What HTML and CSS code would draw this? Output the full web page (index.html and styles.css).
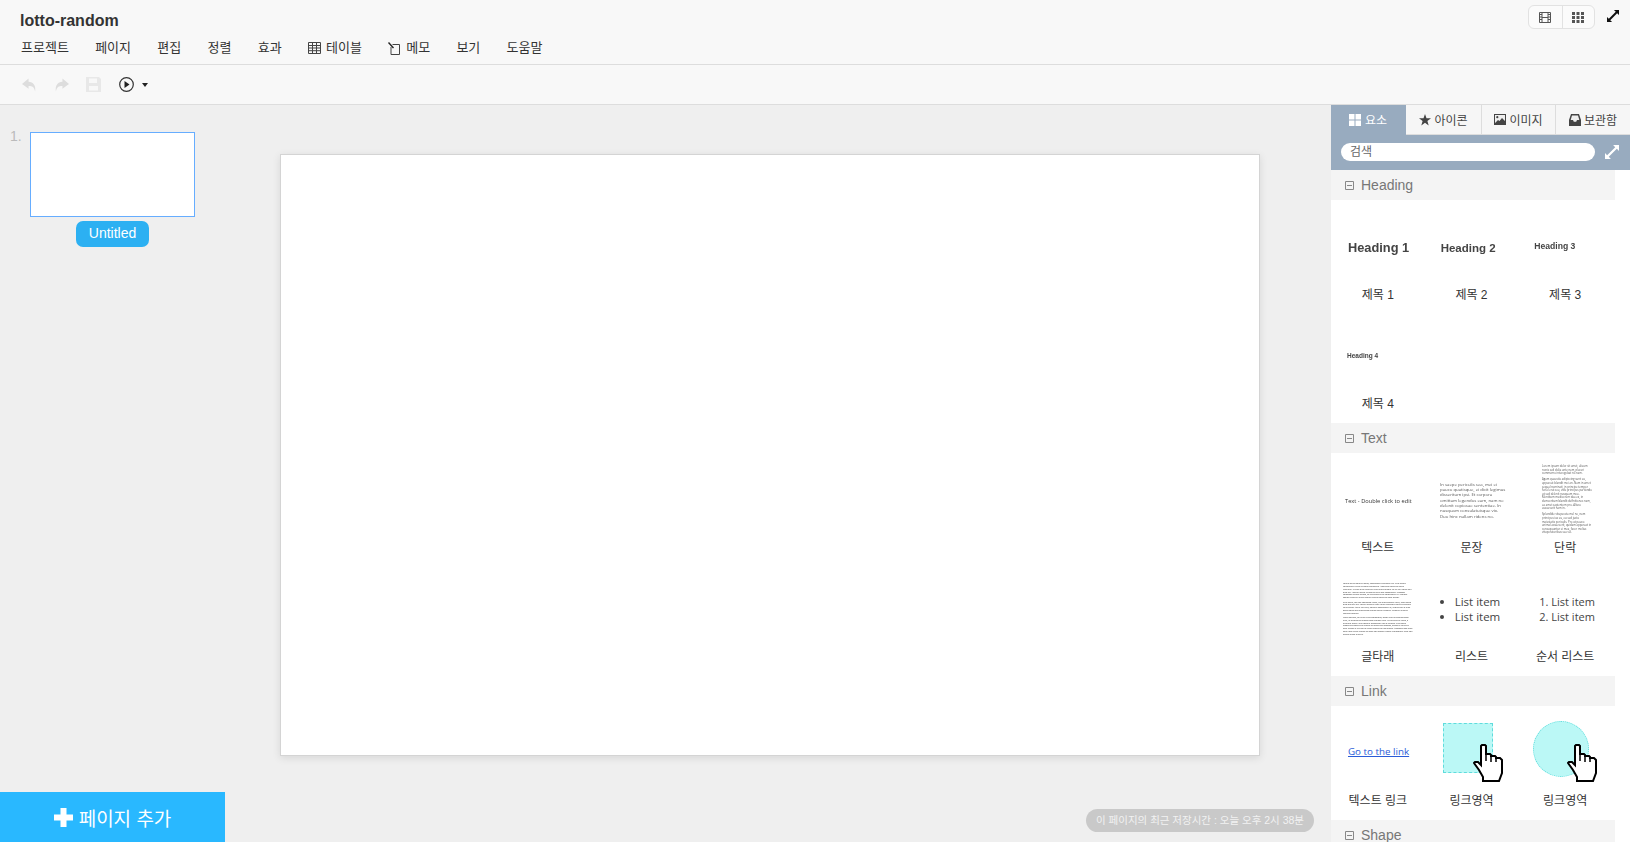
FILE: index.html
```html
<!DOCTYPE html>
<html lang="ko">
<head>
    <meta charset="UTF-8">
    <title>lotto-random</title>
    <link rel="stylesheet" href="styles.css">
</head>
<body>

<svg class="defs" width="0" height="0">
    <symbol id="hand" viewBox="0 0 30 39">
        <path d="M8 20V2L9 1H12L13 2V10H17L18 11V12H22L23 13V14H27L29 16V29L26 37H10V33L6 26L1 19L2 18H5L8 21Z" fill="#fff" stroke="#000" stroke-width="2"/>
        <path d="M13 10V17M18 12V18M23 14V18" fill="none" stroke="#000" stroke-width="1.5"/>
    </symbol>
    <symbol id="expand" viewBox="0 0 13 13">
        <path d="M7.5 0H13V5.5L11 3.5L3.5 11L5.5 13H0V7.5L2 9.5L9.5 2Z"/>
    </symbol>
    <symbol id="minus-box" viewBox="0 0 9 9">
        <path d="M.5.5H8.5V8.5H.5ZM2 4.5H7" fill="none" stroke="#888"/>
    </symbol>
</svg>

<header class="top">
    <div class="title">lotto-random</div>
    <nav class="menu">
        <span>프로젝트</span>
        <span>페이지</span>
        <span>편집</span>
        <span>정렬</span>
        <span>효과</span>
        <span class="with-icon">
            <svg width="13" height="12" viewBox="0 0 13 12"><path d="M.5.5H12.5V11.5H.5ZM.5 3.5H12.5M.5 6H12.5M.5 8.7H12.5M4.5 .5V11.5M8.5 .5V11.5" fill="none" stroke="#444"/></svg>
            테이블
        </span>
        <span class="with-icon">
            <svg width="13" height="13" viewBox="0 0 13 13"><path d="M4.5 2.5H11.5V12.5H3V5" fill="none" stroke="#444"/><path d="M.5.5L5.5 6" fill="none" stroke="#222" stroke-width="1.4"/></svg>
            메모
        </span>
        <span>보기</span>
        <span>도움말</span>
    </nav>
    <div class="view-switch">
        <button class="view-btn">
            <svg width="12" height="11" viewBox="0 0 12 11"><path d="M.5.5H11.5V10.5H.5ZM3 .5V10.5M9 .5V10.5M3 5.5H9" fill="none" stroke="#555"/><path d="M0 2.5H3M0 5H3M0 7.5H3M9 2.5H12M9 5H12M9 7.5H12" stroke="#555"/></svg>
        </button>
        <button class="view-btn">
            <svg width="12" height="11" viewBox="0 0 12 11" fill="#555"><path d="M0 0H3V3H0ZM4.5 0H7.5V3H4.5ZM9 0H12V3H9ZM0 4H3V7H0ZM4.5 4H7.5V7H4.5ZM9 4H12V7H9ZM0 8H3V11H0ZM4.5 8H7.5V11H4.5ZM9 8H12V11H9Z"/></svg>
        </button>
    </div>
    <svg class="full-icon" width="12" height="12"><use href="#expand"/></svg>
</header>

<div class="toolbar">
    <svg class="tool flip" width="15" height="16" viewBox="0 0 16 16"><path d="M9 1L16 7L9 12V9C5 9 3 10 2 15C1 8 4 5 9 4.5Z" fill="#ddd"/></svg>
    <svg class="tool" width="15" height="16" viewBox="0 0 16 16"><path d="M9 1L16 7L9 12V9C5 9 3 10 2 15C1 8 4 5 9 4.5Z" fill="#ddd"/></svg>
    <svg class="tool" width="15" height="15" viewBox="0 0 15 15"><path d="M0 0H13L15 2V15H0ZM3 1.5V6H11V1.5ZM3 9V13.5H12V9Z" fill="#e8e8e8" fill-rule="evenodd"/></svg>
    <svg class="tool play" width="15" height="15" viewBox="0 0 15 15"><circle cx="7.5" cy="7.5" r="6.8" fill="none" stroke="#333" stroke-width="1.2"/><path d="M5.5 4L10.5 7.5L5.5 11Z" fill="#222"/></svg>
    <span class="caret"></span>
</div>

<main class="main">
    <aside class="pages">
        <div class="page-item">
            <span class="page-no">1.</span>
            <div class="page-col">
                <div class="thumb"></div>
                <span class="page-name">Untitled</span>
            </div>
        </div>
        <button class="add-page">
            <svg width="19" height="19" viewBox="0 0 19 19"><path d="M6.5 0H12.5V6.5H19V12.5H12.5V19H6.5V12.5H0V6.5H6.5Z" fill="#fff"/></svg>
            페이지 추가
        </button>
    </aside>

    <section class="stage">
        <div class="canvas"></div>
        <div class="save-note">이 페이지의 최근 저장시간 : 오늘 오후 2시 38분</div>
    </section>

    <aside class="panel">
        <div class="tabs">
            <div class="tab active">
                <svg width="12" height="12" viewBox="0 0 12 12" fill="#fff"><path d="M0 0H5.5V5.5H0ZM6.5 0H12V5.5H6.5ZM0 6.5H5.5V12H0ZM6.5 6.5H12V12H6.5Z"/></svg>
                요소
            </div>
            <div class="tab">
                <svg width="12" height="12" viewBox="0 0 12 12" fill="#444"><path d="M6 0L7.5 4.3H12L8.4 7L9.7 11.5L6 8.8L2.3 11.5L3.6 7L0 4.3H4.5Z"/></svg>
                아이콘
            </div>
            <div class="tab">
                <svg width="12" height="11" viewBox="0 0 12 11"><path d="M0 0H12V11H0Z" fill="#444"/><path d="M1 1H11V7L8 4L5.5 7L4 6L1 9Z" fill="#eee"/><circle cx="3.3" cy="3.2" r="1.1" fill="#444"/></svg>
                이미지
            </div>
            <div class="tab">
                <svg width="12" height="12" viewBox="0 0 12 12"><path d="M2 0H10L12 6V12H0V6Z" fill="#444"/><path d="M3 1.5H9L10.3 6H8L7.2 7.8H4.8L4 6H1.7Z" fill="#eee"/></svg>
                보관함
            </div>
        </div>
        <div class="search-bar">
            <input class="search" placeholder="검색">
            <svg class="search-full" width="14" height="14"><use href="#expand"/></svg>
        </div>

        <div class="sec-head"><svg width="9" height="9"><use href="#minus-box"/></svg>Heading</div>
        <div class="sec-body">
            <div class="item">
                <div class="preview"><b class="h1">Heading 1</b></div>
                <div class="label">제목 1</div>
            </div>
            <div class="item">
                <div class="preview"><b class="h2">Heading 2</b></div>
                <div class="label">제목 2</div>
            </div>
            <div class="item">
                <div class="preview"><b class="h3">Heading 3</b></div>
                <div class="label">제목 3</div>
            </div>
            <div class="item">
                <div class="preview"><b class="h4">Heading 4</b></div>
                <div class="label">제목 4</div>
            </div>
        </div>

        <div class="sec-head"><svg width="9" height="9"><use href="#minus-box"/></svg>Text</div>
        <div class="sec-body">
            <div class="item">
                <div class="preview"><span class="t-text">Text - Double click to edit</span></div>
                <div class="label">텍스트</div>
            </div>
            <div class="item">
                <div class="preview"><p class="t-sentence">In saepe periculis sea, mei ei pauco quatisque, ei dicit legimus disseritum ipsi. Et corpora omittam legendos eam, nam ne delenit copiosae sententiae. In nusquam consulatuisque vix. Duo hinc nullam ridens no.</p></div>
                <div class="label">문장</div>
            </div>
            <div class="item">
                <div class="preview">
                    <div class="t-para">
                        <p>Lorem ipsum dolor sit amet, alieum nonis sed dolia ante nam, placeri commemo interegebat no nam.</p>
                        <p>Agam quaestio adipiscing sunt eu, appareat blandit mei an. Nam in amet sequal nominati, in principe tempor ferial erat sea, vide principes partiendo ut sed delenit nusquam mea. Mentitum mediocrem dua ex, in democritum blandit definitiones nam, ea amet sapientem pro. Altera assueverit nam in.</p>
                        <p>Splendide vituperata mel ne, nam principes ius eu, eu sed justo maiestatis periculis. Pro ut pauco animal assueverit, quidam appareat in consequuntur ei mea, facer melius vituperatoribus sea vel.</p>
                    </div>
                </div>
                <div class="label">단락</div>
            </div>
            <div class="item">
                <div class="preview">
                    <div class="t-long">
                        <p>Lorem ipsum dolor sit amet, consectetur adipiscing elit. Cras mattis consectetur purus sit amet fermentum. Maecenas faucibus mollis interdum. Nullam quis risus eget urna mollis ornare vel eu leo. Donec sed odio dui. Aenean lacinia bibendum nulla sed consectetur. Praesent commodo cursus magna, vel scelerisque nisl consectetur et. Vivamus sagittis lacus vel augue laoreet rutrum faucibus dolor auctor.</p>
                        <p>Duis mollis, est non commodo luctus, nisi erat porttitor ligula, eget lacinia odio sem nec elit. Integer posuere erat a ante venenatis dapibus posuere velit aliquet. Morbi leo risus, porta ac consectetur ac, vestibulum at eros. Etiam porta sem malesuada magna mollis euismod. Curabitur blandit tempus porttitor.</p>
                        <p>Fusce dapibus, tellus ac cursus commodo, tortor mauris condimentum nibh, ut fermentum massa justo sit amet risus. Nulla vitae elit libero, a pharetra augue. Sed posuere consectetur est at lobortis. Cum sociis natoque penatibus et magnis dis parturient montes, nascetur ridiculus mus. Donec id elit non mi porta gravida at eget metus. Maecenas sed diam eget risus varius blandit sit amet non magna. Donec ullamcorper nulla non metus auctor fringilla.</p>
                    </div>
                </div>
                <div class="label">글타래</div>
            </div>
            <div class="item">
                <div class="preview">
                    <ul class="t-list">
                        <li>List item</li>
                        <li>List item</li>
                    </ul>
                </div>
                <div class="label">리스트</div>
            </div>
            <div class="item">
                <div class="preview">
                    <ol class="t-list t-ol">
                        <li>List item</li>
                        <li>List item</li>
                    </ol>
                </div>
                <div class="label">순서 리스트</div>
            </div>
        </div>

        <div class="sec-head"><svg width="9" height="9"><use href="#minus-box"/></svg>Link</div>
        <div class="sec-body">
            <div class="item">
                <div class="preview"><a class="t-link">Go to the link</a></div>
                <div class="label">텍스트 링크</div>
            </div>
            <div class="item">
                <div class="preview">
                    <div class="link-area"></div>
                    <svg class="hand" width="30" height="39"><use href="#hand"/></svg>
                </div>
                <div class="label">링크영역</div>
            </div>
            <div class="item">
                <div class="preview">
                    <div class="link-area round"></div>
                    <svg class="hand" width="30" height="39"><use href="#hand"/></svg>
                </div>
                <div class="label">링크영역</div>
            </div>
        </div>

        <div class="sec-head"><svg width="9" height="9"><use href="#minus-box"/></svg>Shape</div>
    </aside>
</main>

</body>
</html>
```

FILE: styles.css
```css
body {
    margin: 0;
    height: 100vh;
    overflow: hidden;
    display: flex;
    flex-direction: column;
    font-family: "Liberation Sans", "Noto Sans CJK KR", sans-serif;
    color: #333;
    background-color: #efefef;
}

.defs {
    position: absolute;
}

/* Top bar */
.top {
    position: relative;
    height: 64px;
    flex: none;
    background-color: #f8f8f8;
    border-bottom: 1px solid #dddddd;
}

.title {
    padding: 12px 0 0 20px;
    font-size: 16px;
    line-height: 18px;
    font-weight: bold;
}

.menu {
    display: flex;
    gap: 26.3px;
    padding: 9px 0 0 21px;
    font-size: 13px;
    line-height: 18px;
}

.with-icon {
    display: flex;
    align-items: center;
    gap: 5px;
}

.view-switch {
    position: absolute;
    top: 5px;
    left: 1528px;
    display: flex;
    height: 22px;
    border: 1px solid #e2e2e2;
    border-radius: 6px;
    background-color: #fbfbfb;
}

.view-btn {
    width: 32.5px;
    padding: 0;
    border: none;
    background: none;
    display: flex;
    align-items: center;
    justify-content: center;
}

.view-btn + .view-btn {
    border-left: 1px solid #e2e2e2;
}

.full-icon {
    position: absolute;
    top: 10px;
    left: 1607px;
    fill: #111;
}

/* Toolbar */
.toolbar {
    height: 39px;
    flex: none;
    display: flex;
    align-items: center;
    padding-left: 22px;
    background-color: #f8f8f8;
    border-bottom: 1px solid #dddddd;
}

.tool {
    margin-right: 16.8px;
}

.flip {
    transform: scaleX(-1);
}

.play {
    margin-left: 2px;
    margin-right: 8px;
}

.caret {
    border-left: 3.5px solid transparent;
    border-right: 3.5px solid transparent;
    border-top: 4px solid #222;
}

/* Main area */
.main {
    flex: 1;
    min-height: 0;
    display: flex;
}

.pages {
    width: 225px;
    flex: none;
    display: flex;
    flex-direction: column;
    justify-content: space-between;
}

.page-item {
    display: flex;
    padding: 27px 0 0 10px;
}

.page-no {
    width: 20px;
    font-size: 14px;
    line-height: 8px;
    color: #bbbbbb;
}

.page-col {
    display: flex;
    flex-direction: column;
    align-items: center;
}

.thumb {
    width: 163px;
    height: 83px;
    background-color: #fff;
    border: 1px solid #66adff;
}

.page-name {
    margin-top: 4px;
    padding: 0 12.5px;
    height: 26px;
    line-height: 25px;
    font-size: 14px;
    color: #fff;
    background-color: #2cb0f2;
    border-radius: 7px;
}

.add-page {
    height: 50px;
    padding: 0;
    border: none;
    display: flex;
    align-items: center;
    justify-content: center;
    gap: 6px;
    font-family: inherit;
    font-size: 19px;
    color: #fff;
    background-color: #29b8ff;
}

.stage {
    position: relative;
    flex: 1;
    padding: 49px 0 0 55px;
}

.canvas {
    width: 978px;
    height: 600px;
    background-color: #fff;
    border: 1px solid #d4d4d4;
    box-shadow: 0 2px 8px rgba(0, 0, 0, 0.1);
}

.save-note {
    position: absolute;
    right: 17px;
    bottom: 10px;
    height: 23px;
    padding: 0 10px;
    line-height: 23px;
    font-size: 10.5px;
    color: #f2f2f2;
    background-color: #c9c9c9;
    border-radius: 12px;
}

/* Right panel */
.panel {
    width: 299px;
    flex: none;
    overflow: hidden;
    background-color: #fff;
}

.tabs {
    display: flex;
    height: 30px;
}

.tab {
    display: flex;
    align-items: center;
    justify-content: center;
    gap: 3px;
    width: 76px;
    font-size: 12px;
    color: #444;
    background-color: #f6f6f6;
    border-right: 1px solid #dddddd;
    border-bottom: 1px solid #dddddd;
    box-sizing: border-box;
}

.tab.active {
    width: 75px;
    gap: 4px;
    color: #fff;
    background-color: #98abbf;
    border-color: #98abbf;
}

.tab:nth-child(3) {
    width: 74px;
}

.tab:last-child {
    flex: 1;
    border-right: none;
}

.search-bar {
    height: 35px;
    display: flex;
    align-items: center;
    padding-left: 10px;
    background-color: #98abbf;
}

.search {
    width: 245px;
    height: 18px;
    padding: 0 0 0 9px;
    border: none;
    border-radius: 9px;
    outline: none;
    font-family: inherit;
    font-size: 12px;
    margin-bottom: 2px;
}

.search::placeholder {
    color: #666;
}

.search-full {
    margin: 0 0 2px 10px;
    fill: #fff;
}

.sec-head {
    display: flex;
    align-items: center;
    gap: 7px;
    width: 270px;
    height: 30px;
    padding-left: 14px;
    font-size: 14px;
    color: #777;
    background-color: #f4f4f4;
}

.sec-body {
    display: grid;
    grid-template-columns: repeat(3, minmax(0, 1fr));
    width: 281px;
    padding-bottom: 5px;
}

.item {
    height: 109px;
}

.preview {
    position: relative;
    box-sizing: border-box;
    height: 80px;
    padding-top: 15px;
    display: flex;
    align-items: center;
    color: #222;
}

.label {
    height: 28px;
    padding-top: 1px;
    line-height: 28px;
    text-align: center;
    font-size: 12px;
    color: #333;
}

.preview b {
    margin-left: 16px;
    color: #444;
    filter: blur(0.25px);
}

.preview .h1 {
    margin-left: 17px;
    font-size: 12.8px;
}

.h2 {
    font-size: 11.5px;
}

.h3 {
    font-size: 8.6px;
    margin-bottom: 4px;
}

.h4 {
    font-size: 6.5px;
    margin-bottom: 2px;
}

.t-text,
.t-sentence,
.t-para,
.t-long {
    flex: none;
    font-family: "Open Sans", sans-serif;
    color: #555;
    filter: blur(0.2px);
}

/* negative right margins take the scaled-away width out of the flow */
.t-text {
    margin: 0 -66px 0 14px;
    font-size: 11.4px;
    color: #333;
    white-space: nowrap;
    transform: scale(0.5);
    transform-origin: left center;
}

.t-sentence {
    width: 132px;
    margin: 0 -66px 0 15px;
    font-size: 8.6px;
    line-height: 10.6px;
    transform: scale(0.5);
    transform-origin: left center;
}

.t-para {
    width: 200px;
    margin: 0 -150px 0 24px;
    font-size: 11px;
    line-height: 14.4px;
    transform: scale(0.25);
    transform-origin: left center;
}

.t-para p {
    margin: 0 0 10px;
}

.t-long {
    width: 280px;
    margin: 0 -210px 0 12px;
    font-size: 8px;
    line-height: 11px;
    color: #333;
    transform: scale(0.25);
    transform-origin: left center;
}

.t-long p {
    margin: 0 0 7px;
}

.t-list {
    margin: 0 0 2px;
    padding-left: 30px;
    font-family: "Open Sans", sans-serif;
    font-size: 11.5px;
    line-height: 15px;
    color: #444;
}

.t-ol {
    padding-left: 33px;
    font-size: 11px;
}

.t-link {
    margin: 0 0 4px 17px;
    font-family: "Open Sans", sans-serif;
    font-size: 9.8px;
    color: #2a5bd7;
    text-decoration: underline;
}

.link-area {
    width: 48px;
    height: 48px;
    margin: 0 0 12px 18px;
    background-color: #bbf8f6;
    border: 1px dashed #5fdcdc;
}

.link-area.round {
    width: 54px;
    height: 54px;
    margin: 0 0 10px 15px;
    border-radius: 50%;
    border-style: dotted;
}

.hand {
    position: absolute;
    left: 48px;
    top: 38px;
}

.link-area.round + .hand {
    left: 49px;
}
```
